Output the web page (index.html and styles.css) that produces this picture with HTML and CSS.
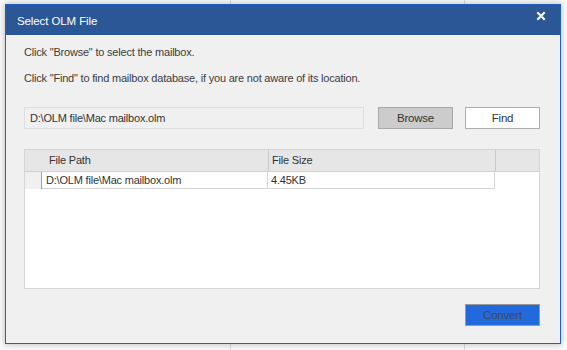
FILE: index.html
```html
<!DOCTYPE html>
<html>
<head>
<meta charset="utf-8">
<link rel="stylesheet" href="styles.css">
</head>
<body>
<div class="desk">
  <div class="dialog">
    <div class="titlebar">
      <span class="title">Select OLM File</span>
      <span class="close">
        <svg width="10" height="10" viewBox="0 0 10 10"><path d="M2 2 L8 8 M8 2 L2 8" stroke="#fff" stroke-width="2" stroke-linecap="square"/></svg>
      </span>
    </div>
    <div class="body">
      <p class="line first">Click "Browse" to select the mailbox.</p>
      <p class="line second">Click "Find" to find mailbox database, if you are not aware of its location.</p>
      <div class="pickrow">
        <div class="pathbox">D:\OLM file\Mac mailbox.olm</div>
        <button class="btn browse">Browse</button>
        <button class="btn find">Find</button>
      </div>
      <div class="grid">
        <div class="ghead">
          <div class="rh"></div>
          <div class="hc c1">File Path</div>
          <div class="hc c2">File Size</div>
          <div class="hfill"></div>
        </div>
        <div class="grow">
          <div class="rh cur"></div>
          <div class="dc c1">D:\OLM file\Mac mailbox.olm</div>
          <div class="dc c2">4.45KB</div>
        </div>
      </div>
      <div class="footer">
        <button class="btn convert">Convert</button>
      </div>
    </div>
  </div>
</div>
</body>
</html>
```

FILE: styles.css
```css
* { box-sizing: border-box; }
html, body { margin: 0; padding: 0; }
body {
  width: 567px;
  height: 350px;
  overflow: hidden;
  background-color: #fbfbfb;
  background-image:
    linear-gradient(#dcdcdc, #dcdcdc),
    linear-gradient(#dcdcdc, #dcdcdc);
  background-size: 1px 100%, 1px 100%;
  background-position: 230px 0, 464px 0;
  background-repeat: no-repeat;
  font-family: "Liberation Sans", Arial, sans-serif;
  font-size: 11px;
  letter-spacing: -0.2px;
  color: #3c3c3c;
}
.desk {
  padding: 4px 0 0 5px;
}
.dialog {
  width: 556px;
  height: 340px;
  border: 1px solid #1f5fbf;
  background: #f0f0f0;
  box-shadow: 0 0 6px 1px rgba(0,0,0,0.22);
  display: flex;
  flex-direction: column;
}
.titlebar {
  height: 30px;
  background: #2b5797;
  display: flex;
  align-items: center;
  justify-content: space-between;
  padding: 0 14px 0 11px;
  flex: none;
}
.title {
  color: #ffffff;
  font-size: 11.5px;
  letter-spacing: -0.1px;
  position: relative;
  top: 1px;
}
.close {
  display: flex;
  width: 10px;
  height: 10px;
  position: relative;
  top: -4px;
}
.body {
  padding: 9px 20px 0 18px;
  flex: 1;
  display: flex;
  flex-direction: column;
}
.line {
  margin: 0;
  height: 16px;
  line-height: 16px;
}
.line.second { margin-top: 10px; }
.pickrow {
  margin-top: 21px;
  display: flex;
  height: 22px;
}
.pathbox {
  width: 340px;
  height: 22px;
  border: 1px solid #dedede;
  background: #f0f0f0;
  padding: 0 0 0 5px;
  line-height: 20px;
  color: #333;
}
.btn {
  font-family: inherit;
  font-size: 11.5px;
  letter-spacing: -0.2px;
  color: #333;
  height: 22px;
  padding: 0;
  margin: 0;
  cursor: default;
}
.browse {
  margin-left: 14px;
  width: 75px;
  background: #cccccc;
  border: 1px solid #a8a8a8;
}
.find {
  margin-left: 12px;
  width: 75px;
  background: #ffffff;
  border: 1px solid #adadad;
}
.grid {
  margin-top: 20px;
  width: 516px;
  height: 140px;
  border: 1px solid #d5d5d5;
  background: #ffffff;
}
.ghead {
  display: flex;
  height: 22px;
  background: #e6e6e6;
  border-bottom: 1px solid #d0d0d0;
}
.rh {
  width: 17px;
  flex: none;
}
.hc {
  line-height: 21px;
  color: #333;
}
.ghead .c1 {
  width: 227px;
  padding-left: 7px;
  border-right: 1px solid #c9c9c9;
}
.ghead .c2 {
  width: 227px;
  padding-left: 3px;
  border-right: 1px solid #c9c9c9;
}
.hfill { flex: 1; }
.grow {
  display: flex;
  height: 17px;
}
.rh.cur {
  background: #f0f0f0;
  border-right: 1px solid #a0a0a0;
}
.dc {
  line-height: 16px;
  border-bottom: 1px solid #d5d5d5;
  color: #333;
}
.grow .c1 {
  width: 226px;
  padding-left: 4px;
  border-right: 1px solid #d5d5d5;
}
.grow .c2 {
  width: 227px;
  padding-left: 3px;
  border-right: 1px solid #d5d5d5;
}
.footer {
  margin-top: 15px;
  display: flex;
  justify-content: flex-end;
  width: 516px;
}
.convert {
  width: 75px;
  background: #2269dc;
  border: 1px solid #9a9a9a;
  color: #3e4a5c;
}
```
